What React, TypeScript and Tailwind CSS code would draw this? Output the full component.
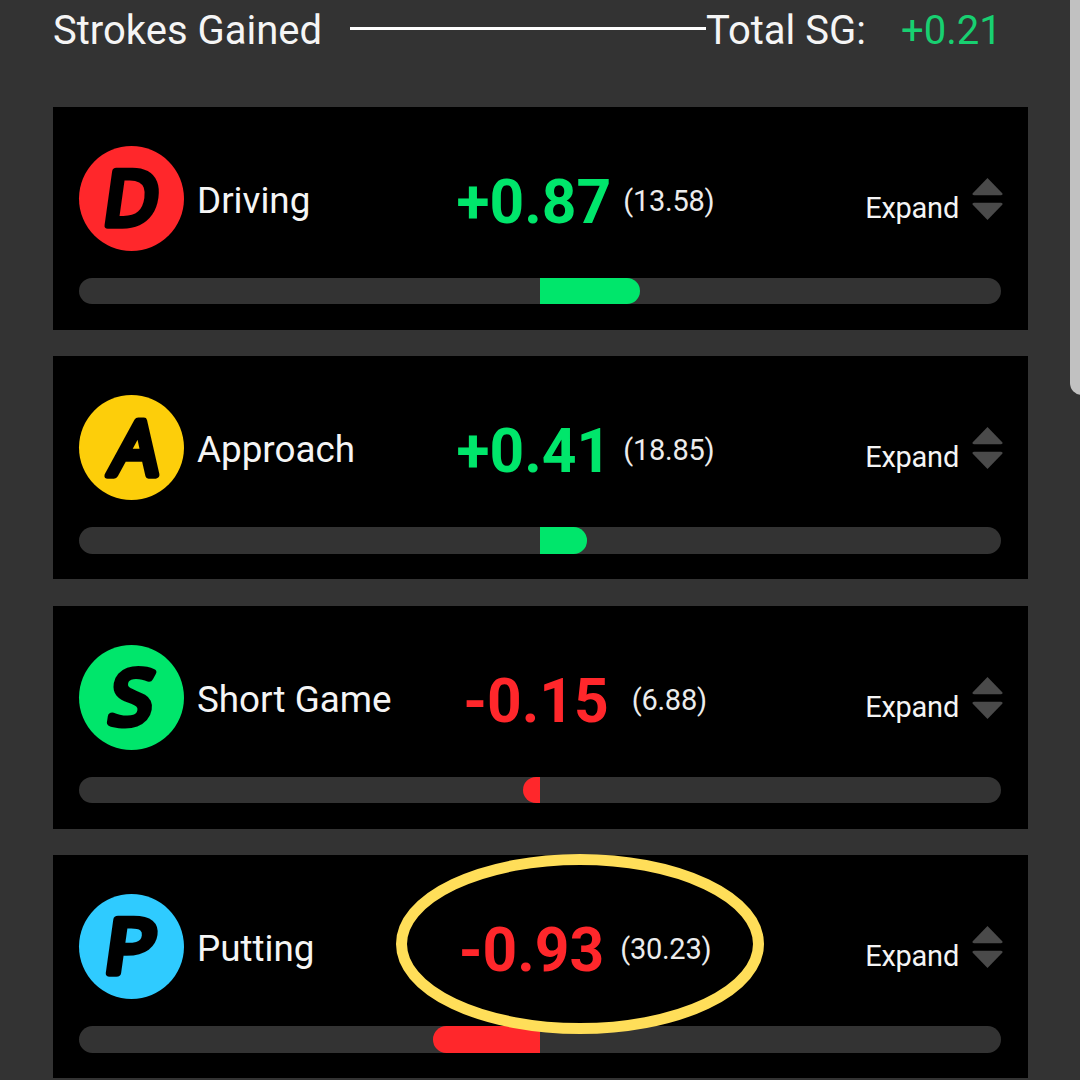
type Category = {
  letter: string
  name: string
  value: string
  rounds: string
  color: string
  bar: number
  glyph: string
  score: string
}

const categories: Category[] = [
  { letter: "D", name: "Driving", value: "+0.87", rounds: "(13.58)", color: "fill-[#ff272b]", bar: 100, glyph: "translate(49.3 79) skewX(-8)", score: "gap-3 pl-px text-[#00e66b]" },
  { letter: "A", name: "Approach", value: "+0.41", rounds: "(18.85)", color: "fill-[#fdce0a]", bar: 47, glyph: "translate(53 79.5) skewX(-9)", score: "gap-3 pl-px text-[#00e66b]" },
  { letter: "S", name: "Short Game", value: "-0.15", rounds: "(6.88)", color: "fill-[#00e66b]", bar: -17, glyph: "translate(49 79) skewX(-9) scale(1.04 1)", score: "gap-[23px] text-[#ff272b]" },
  { letter: "P", name: "Putting", value: "-0.93", rounds: "(30.23)", color: "fill-[#2fcbff]", bar: -107, glyph: "translate(48 79) skewX(-8) scale(1.12 1)", score: "gap-4 text-[#ff272b]" },
]

function Badge({ letter, color, glyph }: { letter: string; color: string; glyph: string }) {
  return (
    <svg className="size-[105px] shrink-0 overflow-visible" viewBox="0 0 105 105">
      <circle cx="52.5" cy="52.5" r="52.5" className={color} />
      <text
        transform={glyph}
        textAnchor="middle"
        strokeWidth="7.5"
        strokeLinejoin="round"
        className="fill-black stroke-black font-['Open_Sans',sans-serif] text-[75px] font-normal"
      >
        {letter}
      </text>
    </svg>
  )
}

function SortArrows() {
  return (
    <svg className="mt-8 -mr-0.5 ml-[13px] h-[43px] w-[31px] shrink-0 fill-[#4a4a4a]" viewBox="0 0 31 43">
      <path d="M15.5 0 L30.5 15.5 Q31 17.3 29 17.3 H2 Q0 17.3 0.5 15.5 Z" />
      <path d="M15.5 42 L30.5 26.5 Q31 24.7 29 24.7 H2 Q0 24.7 0.5 26.5 Z" />
    </svg>
  )
}

function Bar({ bar }: { bar: number }) {
  const positive = bar > 0
  return (
    <div className="mt-[27px] flex h-[26.5px] rounded-full bg-[#333333]">
      <div className="flex w-1/2 justify-end">
        {!positive && <div className="rounded-l-[13.25px] bg-[#ff272b]" style={{ width: -bar }} />}
      </div>
      <div className="flex w-1/2">
        {positive && <div className="rounded-r-[13.25px] bg-[#00e66b]" style={{ width: bar }} />}
      </div>
    </div>
  )
}

function CategoryCard({ item }: { item: Category }) {
  return (
    <div className="h-[223.1px] bg-black pt-[39px] pr-[27px] pl-[26px]">
      <div className="flex h-[105px] items-start leading-none">
        <Badge letter={item.letter} color={item.color} glyph={item.glyph} />
        <p className="w-[246px] shrink-0 pt-[37px] pl-[13px] text-[36.8px] whitespace-nowrap">{item.name}</p>
        <div className={`flex w-[310px] shrink-0 justify-center ${item.score}`}>
          <p className="pt-[27px] text-[60.5px] font-bold">{item.value}</p>
          <p className="pt-[41px] text-[29px] tracking-[-0.25px] text-[#ececec]">{item.rounds}</p>
        </div>
        <div className="flex grow justify-end">
          <p className="pt-12 text-[29px] tracking-[-0.25px]">Expand</p>
          <SortArrows />
        </div>
      </div>
      <Bar bar={item.bar} />
    </div>
  )
}

export default function App() {
  return (
    <main className="relative h-[1080px] w-[1080px] overflow-hidden bg-[#333333] pr-[52px] pl-[53px] font-[Roboto,sans-serif] text-[#f5f5f5]">
      <header className="flex h-[106.7px] items-start pt-[11px] text-[40px] leading-none whitespace-nowrap">
        <h1 className="w-[297px] shrink-0">Strokes Gained</h1>
        <div className="mt-4 h-[3px] w-[356px] shrink-0 bg-white" />
        <p className="w-[195px] shrink-0">Total SG:</p>
        <p className="text-[#18d071]">+0.21</p>
      </header>

      <div className="flex flex-col gap-[26.35px]">
        {categories.map((item) => (
          <CategoryCard key={item.name} item={item} />
        ))}
      </div>

      {/* scrollbar thumb */}
      <div className="absolute top-[-20px] left-[1070px] h-[415px] w-6 rounded-[12px] bg-[#c1c1c1]" />

      {/* marker ring around the putting score */}
      <svg className="absolute top-[854px] left-[396px] h-[180px] w-[368px]" viewBox="0 0 368 180">
        <ellipse cx="184" cy="90" rx="178.5" ry="84.5" fill="none" stroke="#ffde59" strokeWidth="11" />
      </svg>
    </main>
  )
}
